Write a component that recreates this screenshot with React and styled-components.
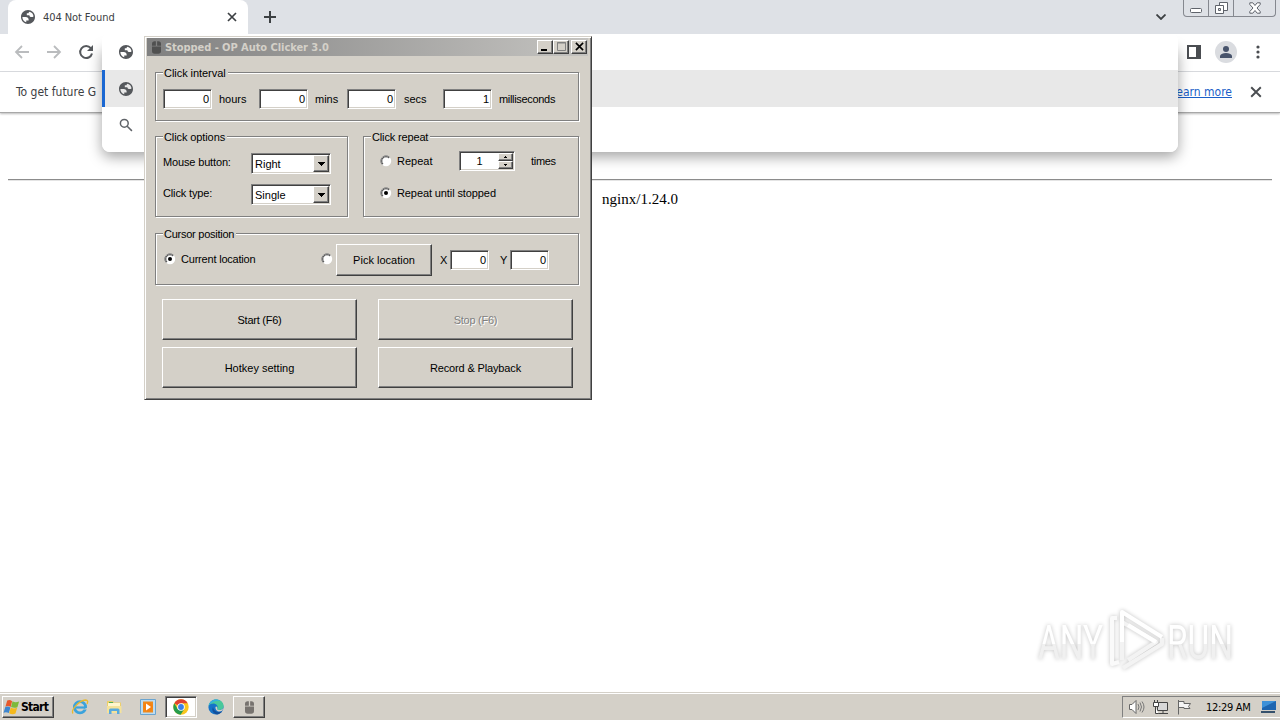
import React from "react";
import styled, { createGlobalStyle, css } from "styled-components";

const GlobalStyle = createGlobalStyle`
  * {
    box-sizing: border-box;
  }

  body {
    margin: 0;
    overflow: hidden;
    background: #fff;
  }
`;

const Desktop = styled.div`
  position: relative;
  display: flex;
  flex-direction: column;
  width: 1280px;
  height: 720px;
  overflow: hidden;
  color: #000;
  font-family: "Liberation Sans", sans-serif;
  font-size: 11px;
  white-space: nowrap;

  svg {
    display: block;
    flex: none;
  }
`;

/* ---------- browser ---------- */

const TabStrip = styled.div`
  display: flex;
  height: 34px;
  padding-left: 8px;
  background: #dee1e6;
`;

const Tab = styled.div`
  display: flex;
  align-items: center;
  width: 240px;
  padding: 0 11px 0 13px;
  background: #fff;
  border-radius: 8px 8px 0 0;
  color: #3c4043;
  font-family: "DejaVu Sans Condensed", "DejaVu Sans", sans-serif;
  font-size: 11px;
  letter-spacing: -0.08px;
`;

const TabTitle = styled.span`
  flex: 1;
  margin-left: 8px;
`;

const NewTab = styled.div`
  display: flex;
  align-items: center;
  flex: 1;
  padding-left: 16px;
`;

const TabSearch = styled.div`
  display: flex;
  align-items: center;
  margin-right: 17px;
`;

const WindowButtons = styled.div`
  display: flex;
  height: 17px;
  margin-right: 4px;
  border: 1px solid #85888f;
  border-top: 0;
  border-radius: 0 0 4px 4px;
`;

const WindowButton = styled.div`
  display: flex;
  justify-content: center;
  width: ${(props) => props.$width}px;
  padding-top: 2px;

  & + & {
    border-left: 1px solid #85888f;
  }
`;

const Toolbar = styled.div`
  display: flex;
  align-items: center;
  height: 38px;
  padding: 0 15px 2px 14px;
  border-bottom: 1px solid #dadce0;
`;

const NavIcons = styled.div`
  display: flex;
  flex: 1;
  gap: 16px;
`;

const ToolIcons = styled.div`
  display: flex;
  align-items: center;
  gap: 14px;
`;

const Avatar = styled.div`
  display: flex;
  align-items: center;
  justify-content: center;
  width: 22px;
  height: 22px;
  border-radius: 50%;
  background: #dadce0;
`;

const InfoBar = styled.div`
  display: flex;
  align-items: center;
  justify-content: space-between;
  height: 41px;
  padding: 0 18px 0 16px;
  border-bottom: 1px solid #a8a8a8;
  box-shadow: 0 1px 2px #bbb;
  color: #3c4043;
  font-family: "DejaVu Sans Condensed", "DejaVu Sans", sans-serif;
  font-size: 12px;
`;

const InfoActions = styled.div`
  display: flex;
  align-items: center;
  gap: 18px;
`;

const InfoLink = styled.a`
  color: #1a5fc8;
  text-decoration: underline;
`;

const Page = styled.main`
  flex: 1;
  padding: 66px 8px 0;
  font-family: "Liberation Serif", serif;
  font-size: 15px;
  text-align: center;
`;

const Rule = styled.hr`
  height: 2px;
  margin: 0 0 10px;
  border: 0;
  border-top: 1px solid #8c8c8c;
  border-bottom: 1px solid #e4e4e4;
`;

const Suggestions = styled.div`
  position: absolute;
  top: 34px;
  left: 102px;
  width: 1076px;
  height: 118px;
  overflow: hidden;
  border-radius: 6px 6px 8px 8px;
  background: #fff;
`;

const SuggestionShadow = styled.div`
  position: absolute;
  top: 44px;
  left: 102px;
  width: 1076px;
  height: 108px;
  border-radius: 8px;
  box-shadow: 0 5px 14px rgba(0, 0, 0, 0.36);
`;

const Suggestion = styled.div`
  display: flex;
  align-items: center;
  height: ${(props) => (props.$active ? 37 : 36)}px;
  padding-left: ${(props) => (props.$active ? 14 : 17)}px;
  background: ${(props) => (props.$active ? "#e8e8e8" : "#fff")};
  border-left: ${(props) => (props.$active ? "3px solid #1a67d2" : "0")};
`;

/* ---------- auto clicker ---------- */

const raised = css`
  border: 1px solid;
  border-color: #fff #404040 #404040 #fff;
  box-shadow: inset -1px -1px #808080;
`;

const sunken = css`
  border: 1px solid;
  border-color: #808080 #fff #fff #808080;
  box-shadow: inset 1px 1px #404040, inset -1px -1px #d4d0c8;
`;

const Dialog = styled.section`
  position: absolute;
  top: 36px;
  left: 144px;
  width: 448px;
  height: 364px;
  padding: 1px 3px 0 2px;
  border: 1px solid;
  border-color: #d4d0c8 #404040 #404040 #d4d0c8;
  background: #d4d0c8;
  box-shadow: inset 1px 1px #fff, inset -1px -1px #808080;
`;

const TitleBar = styled.header`
  display: flex;
  align-items: center;
  height: 18px;
  padding: 0 1px 0 5px;
  background: linear-gradient(90deg, #808080, #c4c3c0);
  color: #d4d0c8;
  font-family: "DejaVu Sans Condensed", "DejaVu Sans", sans-serif;
  font-weight: bold;
`;

const Title = styled.h1`
  flex: 1;
  margin: 0 0 0 4px;
  font-size: 11px;
  letter-spacing: -0.05px;
`;

const CaptionButton = styled.div`
  display: flex;
  align-items: center;
  justify-content: center;
  width: 16px;
  height: 14px;
  margin: 0 0 1px ${(props) => props.$gap || 0}px;
  background: #d4d0c8;
  ${raised}
`;

const DialogBody = styled.div`
  padding: 16px 9px 0 8px;
`;

const GroupRow = styled.div`
  display: flex;
  gap: 15px;
  margin: 15px 0 16px;
`;

const Group = styled.div`
  display: flex;
  flex-direction: column;
  width: ${(props) => props.$width}px;
  height: ${(props) => props.$height}px;
  padding-left: 7px;
  border: 1px solid #808080;
  box-shadow: 1px 1px #fff, inset 1px 1px #fff;
`;

const GroupTitle = styled.span`
  align-self: flex-start;
  height: 14px;
  margin-top: -7px;
  padding: 0 2px 0 1px;
  background: #d4d0c8;
  line-height: 14px;
  letter-spacing: ${(props) => props.$spacing || 0}px;
`;

const Label = styled.span`
  padding: 0 0 ${(props) => props.$lift || 0}px ${(props) => props.$indent || 0}px;
  letter-spacing: ${(props) => props.$spacing || 0}px;
`;

const IntervalRow = styled.div`
  display: grid;
  grid-template-columns: 56px 40px 56px 32px 57px 39px 56px auto;
  align-items: center;
  margin-top: 9px;
`;

const Field = styled.div`
  flex: none;
  width: ${(props) => props.$width || 49}px;
  height: 20px;
  padding-right: 2px;
  background: #fff;
  line-height: 18px;
  text-align: right;
  ${sunken}
`;

const OptionGrid = styled.div`
  display: grid;
  grid-template-columns: 88px 80px;
  grid-auto-rows: 21px;
  row-gap: 10px;
  align-items: center;
  margin-top: 9px;
`;

const Combo = styled.div`
  display: flex;
  align-items: center;
  justify-content: space-between;
  height: 21px;
  padding: 1px 1px 1px 3px;
  background: #fff;
  ${sunken}
`;

const ComboArrow = styled.div`
  display: flex;
  align-items: center;
  justify-content: center;
  width: 16px;
  height: 17px;
  background: #d4d0c8;
  ${raised}
`;

const RepeatRow = styled.div`
  display: flex;
  align-items: center;
  height: 20px;
  margin: ${(props) => props.$top}px 0 0 9px;
`;

const RepeatOption = styled.div`
  display: flex;
  align-items: center;
  gap: 5px;
  width: ${(props) => props.$width || "auto"};
`;

const Spinner = styled.div`
  display: flex;
  width: 56px;
  height: 20px;
  margin-right: 16px;
  padding: 1px;
  background: #fff;
  ${sunken}
`;

const SpinnerValue = styled.span`
  flex: 1;
  line-height: 17px;
  text-align: center;
`;

const SpinnerButtons = styled.div`
  display: flex;
  flex-direction: column;
`;

const SpinnerButton = styled.div`
  display: flex;
  align-items: center;
  justify-content: center;
  width: 15px;
  height: 8px;
  background: #d4d0c8;
  ${raised}
`;

const CursorRow = styled.div`
  display: grid;
  grid-template-columns: 157px 15px 104px 10px 50px 10px 39px;
  align-items: center;
  height: 32px;
  margin: 3px 0 0 1px;
`;

const RadioLine = styled.div`
  display: flex;
  align-items: center;
  gap: 5px;
  padding-bottom: 3px;
`;

const Button = styled.button`
  height: ${(props) => props.$height || 41}px;
  width: ${(props) => props.$width || 195}px;
  padding: 0;
  background: #d4d0c8;
  border-radius: 0;
  color: ${(props) => (props.disabled ? "#808080" : "#000")};
  font: 11px "Liberation Sans", sans-serif;
  letter-spacing: ${(props) => props.$spacing || 0}px;
  text-shadow: ${(props) => (props.disabled ? "1px 1px #fff" : "none")};
  ${raised}
`;

const ButtonGrid = styled.div`
  display: grid;
  grid-template-columns: 195px 195px;
  gap: 7px 21px;
  margin: 14px 0 0 7px;
`;

/* ---------- taskbar ---------- */

const Taskbar = styled.footer`
  display: flex;
  align-items: center;
  height: 28px;
  padding: 1px 0 0 2px;
  border-top: 1px solid #d4d0c8;
  background: #d4d0c8;
  box-shadow: inset 0 1px #fff;
`;

const StartButton = styled.div`
  display: flex;
  align-items: center;
  width: 52px;
  height: 22px;
  font-family: "DejaVu Sans Condensed", "DejaVu Sans", sans-serif;
  font-weight: bold;
  font-size: 12px;
  letter-spacing: -0.7px;
  ${raised}
`;

const Shortcuts = styled.div`
  display: flex;
  flex: 1;
  align-items: center;
  margin-left: 9px;
`;

const Shortcut = styled.div`
  display: flex;
  align-items: center;
  justify-content: center;
  width: 34px;
  height: 22px;
`;

const TaskButton = styled(Shortcut)`
  width: 32px;
  margin-right: 2px;
  ${(props) => (props.$active ? sunken : raised)}
  background: ${(props) => (props.$active ? "#fff" : "#d4d0c8")};
`;

const Tray = styled.div`
  display: flex;
  align-items: center;
  width: 158px;
  height: 22px;
  padding: 0 3px 0 5px;
  border: 1px solid;
  border-color: #808080 #fff #fff #808080;
  border-right: 0;
  font-family: "DejaVu Sans Condensed", "DejaVu Sans", sans-serif;
`;

const TrayIcons = styled.div`
  display: flex;
  gap: 7px;
`;

const Clock = styled.span`
  flex: 1;
  margin-left: 13px;
  letter-spacing: -0.3px;
`;

const Watermark = styled.div`
  position: absolute;
  left: 1030px;
  top: 602px;
  filter: drop-shadow(0 0 2px rgba(0, 0, 0, 0.24));
`;

/* ---------- icons ---------- */

const Globe = () => (
  <svg width="14" height="14" viewBox="2 2 20 20">
    <path
      d="M12 2C6.480 2 2 6.480 2 12s4.480 10 10 10 10-4.480 10-10S17.520 2 12 2zM4 12h4.400c3.400.020 4.900 1.730 4.500 5.130H9.500v2.470A8 8 0 0 1 4 12zm15.900-1.200c-.8.900-1.600 1.200-2.900 1.200-2 0-3-.9-3-2.500h-3.700V6.700h2.500c0-1.200.5-2 1.500-2.300a8 8 0 0 1 5.600 6.400z"
      fill="#55585c"
    />
  </svg>
);

const Cross = ({ size = 10, color = "#3c4043", weight = 1.7 }) => (
  <svg width={size} height={size} viewBox="0 0 10 10">
    <path d="m1 1 8 8M9 1 1 9" stroke={color} strokeWidth={weight} />
  </svg>
);

const Arrow = ({ back }) => (
  <svg width="16" height="16" viewBox="0 0 16 16">
    <path
      d={back ? "M15 8H2M8 2 2 8l6 6" : "M1 8h13M8 2l6 6-6 6"}
      fill="none"
      stroke="#babcbe"
      strokeWidth="1.8"
    />
  </svg>
);

const Reload = () => (
  <svg width="16" height="16" viewBox="0 0 16 16">
    <path
      d="M12.8 4.2A6 6 0 1 0 14 9.5"
      fill="none"
      stroke="#55585c"
      strokeWidth="2"
    />
    <path d="M15 1v6H9Z" fill="#55585c" />
  </svg>
);

const Search = () => (
  <svg width="14" height="14" viewBox="0 0 14 14">
    <g fill="none" stroke="#5f6368" strokeWidth="1.5">
      <circle cx="5.3" cy="5.3" r="3.9" />
      <path d="m8.2 8.2 4.7 4.7" />
    </g>
  </svg>
);

const Triangle = ({ up, width = 7, height = 4 }) => (
  <svg
    width={width}
    height={height}
    viewBox={`0 0 ${width} ${height}`}
    shapeRendering="crispEdges"
  >
    <path
      d={
        up
          ? `M0 ${height}H${width}L${width / 2} 0Z`
          : `M0 0H${width}L${width / 2} ${height}Z`
      }
    />
  </svg>
);

const Mouse = ({ width = 9, height = 13, color = "#505050" }) => (
  <svg width={width} height={height} viewBox="0 0 10 14">
    <path
      d="M0 5V3a3 3 0 0 1 3-3h1.3v5ZM5.7 0H7a3 3 0 0 1 3 3v2H5.7ZM0 6h10v5a3 3 0 0 1-3 3H3a3 3 0 0 1-3-3Z"
      fill={color}
    />
  </svg>
);

const Radio = ({ checked }) => (
  <svg width="12" height="12" viewBox="0 0 12 12">
    <circle cx="6" cy="6" r="5.2" fill="#fff" />
    <path d="M9.7 2.3a5.200 5.200 0 0 0-7.400 7.400" fill="none" stroke="#808080" />
    <path d="M9 3a4.240 4.240 0 0 0-6 6" fill="none" stroke="#404040" />
    {checked && <circle cx="6" cy="6" r="2" />}
  </svg>
);

const WindowsFlag = () => (
  <svg width="18" height="17" viewBox="0 0 17 16">
    <path d="M4 1.500Q6.300.3 8.600 2L7.200 7.500Q5 6 2.300 7.200Z" fill="#e8592b" />
    <path d="M9 2.200q2.500 1.700 6.200.2l-1.600 5.400Q10.600 9 7.600 7.600Z" fill="#7db93b" />
    <path d="M2.200 7.600Q4.700 6.400 7 7.900L5.500 13.300Q3 11.800.5 13Z" fill="#3e86cf" />
    <path d="M7.400 8.100q2.700 1.500 6 .2l-1.600 5.400q-2.800 1.300-6-.2Z" fill="#f5b91c" />
  </svg>
);

const Explorer = () => (
  <svg width="18" height="18" viewBox="0 0 18 18">
    <circle cx="9" cy="9.3" r="5.6" fill="none" stroke="#3ba3dc" strokeWidth="2.8" />
    <path d="M5 9.5h9.500" stroke="#3ba3dc" strokeWidth="2.2" />
    <path d="M11.500 11.600h5v-1.800z" fill="#d4d0c8" />
    <path
      d="M2 15.500C-.500 12 8 2.500 14.500 2c2.500 0 2.600 2 1.500 4"
      fill="none"
      stroke="#e9b92e"
      strokeWidth="1.3"
    />
  </svg>
);

const Folder = () => (
  <svg width="17" height="16" viewBox="0 0 17 16">
    <path d="M1 2h6l1 1.500h7V14H1Z" fill="#edcf6b" />
    <path d="M2 4h12v3H2Z" fill="#fff6ce" />
    <path d="M3 3h4v1H3Z" fill="#4eae59" />
    <path d="M1 7h14.500V14H1Z" fill="#f5e29a" />
    <path d="M3 15v-4q0-1.500 1.500-1.500h7.500q1.500 0 1.500 1.500v4h-2.500v-3H5.500v3Z" fill="#58a9de" />
  </svg>
);

const MediaPlayer = () => (
  <svg width="16" height="16" viewBox="0 0 16 16">
    <path d="M.5.5h15v15H.5Z" fill="#bcdcf2" stroke="#6aa4cf" />
    <path d="M3 2.500h10v11H3Z" fill="#ef8b1d" />
    <circle cx="8" cy="8" r="4.7" fill="#f48213" />
    <path d="m6 4.500 5 3.500-5 3.500Z" fill="#fff" />
  </svg>
);

const Chrome = () => (
  <svg width="16" height="16" viewBox="0 0 16 16">
    <circle cx="8" cy="8" r="7.7" fill="#f9c51d" />
    <path d="M8 8 1.300 4.200A7.700 7.700 0 0 1 14.700 4.200H8Z" fill="#df4132" />
    <path d="M1.300 4.200A7.700 7.700 0 0 0 7.600 15.700L11.300 9.900 8 8 4.700 9.900Z" fill="#269c4c" />
    <circle cx="8" cy="8" r="3.8" fill="#fff" />
    <circle cx="8" cy="8" r="2.9" fill="#397fe8" />
  </svg>
);

const Edge = () => (
  <svg width="16" height="16" viewBox="0 0 16 16">
    <circle cx="8" cy="8" r="7.6" fill="#1673c8" />
    <path
      d="M.5 7C1.200 3 4.300.4 8.200.4c4.500 0 7.400 3.100 7.400 6.600 0 2.600-2 4-4.300 4-2.300 0-2.500-.9-1.800-1.900C10.800 5.500 4.500 2 .5 7Z"
      fill="#48c89b"
    />
    <path d="M.5 7C1.200 3 4.300.4 8 .4c2 0 3.500.5 4.800 1.500C9 1.500 4 2.500.5 7Z" fill="#35afe0" />
    <path d="M5 8c-2 4 1 7 4.500 7.400 2-.3 3.600-1.600 4.600-3.200C10 14.300 5.500 12 5 8Z" fill="#124f9c" />
    <path d="M9.500 9.100c-.7 1-.5 1.900 1.800 1.900 1.700 0 3-.6 3.800-1.800l-.6 2.200c-3.500 2.600-7.500.2-7-3.400.3-1 1.500-.9 2 1.100Z" fill="#d4d0c8" />
  </svg>
);

const Speaker = () => (
  <svg width="17" height="16" viewBox="0 0 17 16">
    <path d="M1.500 5.500H4l4-4v13l-4-4H1.500Z" fill="#fff" stroke="#666" />
    <path d="M10 5q2 3 0 6M12 3.500q3 4.500 0 9M14 2.500q4 5.500 0 11" fill="none" stroke="#777" />
  </svg>
);

const Network = () => (
  <svg width="17" height="16" viewBox="0 0 17 16">
    <path d="M5.500 3.500h10v8h-10Z" fill="#d8d8d8" stroke="#444" />
    <path d="M6 14.500h10M11 12v2" stroke="#444" />
    <path d="M1.500 3.500h5v4h-5ZM2.500 1v2M5.500 1v2M3.500 8v6.500h3" fill="#fff" stroke="#444" />
  </svg>
);

const Flag = () => (
  <svg width="17" height="16" viewBox="0 0 17 16">
    <path d="M2.500 1v14.500M3 2.500h5v2h6.500l-2 3 1.500 2H8v-1H3" fill="#f4f4f4" stroke="#666" />
  </svg>
);

const ShowDesktop = () => (
  <svg width="16" height="14" viewBox="0 0 16 14">
    <path d="M1 1h14v9H1Z" fill="#1d65b0" />
    <path d="M1 1h14L1 8Z" fill="#3e91d8" />
    <path d="M0 12h14" stroke="#35506b" strokeWidth="2" />
  </svg>
);

const AnyRunLogo = () => (
  <svg width="240" height="80" viewBox="0 0 240 80">
    <defs>
      <linearGradient id="letters" x1="0" y1="0" x2="0" y2="1">
        <stop offset="0.52" stopColor="#fff" />
        <stop offset="0.53" stopColor="#f0f0f0" />
      </linearGradient>
    </defs>
    <g fill="url(#letters)" fontFamily="Roboto, sans-serif" fontSize="48">
      <text x="8" y="57" textLength="65" lengthAdjust="spacingAndGlyphs">
        ANY
      </text>
      <text x="137" y="57" textLength="66" lengthAdjust="spacingAndGlyphs">
        RUN
      </text>
    </g>
    <g fill="none" strokeWidth="4" strokeLinejoin="round">
      <path d="M87 16h-5v46l7-2" stroke="#fafafa" />
      <path d="M92 58V20M93 66l39-24v-6M98 58l28-18-34-20" stroke="#f3f3f3" />
      <path d="M92 40V10l40 25M98 23l28 17" stroke="#fff" />
    </g>
  </svg>
);

/* ---------- sections ---------- */

const intervals = [
  { label: "hours", value: 0 },
  { label: "mins", value: 0 },
  { label: "secs", value: 0 },
  { label: "milliseconds", value: 1, spacing: -0.32 },
];

const clickOptions = [
  { label: "Mouse button:", value: "Right" },
  { label: "Click type:", value: "Single" },
];

const Browser = () => (
  <>
    <TabStrip>
      <Tab>
        <Globe />
        <TabTitle>404 Not Found</TabTitle>
        <Cross />
      </Tab>
      <NewTab>
        <svg width="12" height="12" viewBox="0 0 12 12">
          <path d="M6 0v12M0 6h12" stroke="#3c4043" strokeWidth="2" />
        </svg>
      </NewTab>
      <TabSearch>
        <svg width="10" height="6" viewBox="0 0 10 6">
          <path d="m.5.5 4.500 4.500L9.500.5" fill="none" stroke="#3c4043" strokeWidth="1.8" />
        </svg>
      </TabSearch>
      <WindowButtons>
        <WindowButton $width={24}>
          <svg width="13" height="12" viewBox="0 0 13 12">
            <rect x=".5" y="6.500" width="11" height="4" rx="1" fill="#fff" stroke="#5f636b" />
          </svg>
        </WindowButton>
        <WindowButton $width={25}>
          <svg width="13" height="12" viewBox="0 0 13 12">
            <path d="M4.500.5h8v8h-8Z" fill="#fff" stroke="#5f636b" />
            <path d="M.5 3.500h8v8h-8Z" fill="#fff" stroke="#5f636b" />
            <path d="M3.500 6.500h2v2h-2Z" fill="#dee1e6" stroke="#5f636b" />
          </svg>
        </WindowButton>
        <WindowButton $width={42}>
          <svg width="12" height="12" viewBox="0 0 12 12">
            <path
              d="M.8.8h3L6 3.500 8.200.8h3v1.700L8 6l3.200 3.500v1.700h-3L6 8.500 3.800 11.200h-3V9.500L4 6 .8 2.500Z"
              fill="#fff"
              stroke="#5f636b"
            />
          </svg>
        </WindowButton>
      </WindowButtons>
    </TabStrip>
    <Toolbar>
      <NavIcons>
        <Arrow back />
        <Arrow />
        <Reload />
      </NavIcons>
      <ToolIcons>
        <svg width="14" height="14" viewBox="0 0 14 14">
          <path d="M1 1h12v12H1Z" fill="#fff" stroke="#4a4d51" strokeWidth="2" />
          <path d="M9 0h5v14H9Z" fill="#4a4d51" />
        </svg>
        <Avatar>
          <svg width="12" height="12" viewBox="0 0 12 12">
            <circle cx="6" cy="3" r="3" fill="#47536b" />
            <path d="M0 12V9.500Q1.500 7 6 7t6 2.500V12Z" fill="#47536b" />
          </svg>
        </Avatar>
        <svg width="14" height="16" viewBox="0 0 14 16">
          <g fill="#4a4d51">
            <circle cx="7" cy="3" r="1.6" />
            <circle cx="7" cy="8" r="1.6" />
            <circle cx="7" cy="13" r="1.6" />
          </g>
        </svg>
      </ToolIcons>
    </Toolbar>
    <InfoBar>
      <span>To get future G</span>
      <InfoActions>
        <InfoLink>Learn more</InfoLink>
        <Cross size={12} color="#4a4d51" weight={1.6} />
      </InfoActions>
    </InfoBar>
    <Page>
      <Rule />
      nginx/1.24.0
    </Page>
    <SuggestionShadow />
    <Suggestions>
      <Suggestion>
        <Globe />
      </Suggestion>
      <Suggestion $active>
        <Globe />
      </Suggestion>
      <Suggestion>
        <Search />
      </Suggestion>
    </Suggestions>
  </>
);

const AutoClicker = () => (
  <Dialog>
    <TitleBar>
      <Mouse />
      <Title>Stopped - OP Auto Clicker 3.0</Title>
      <CaptionButton>
        <svg width="8" height="8">
          <path d="M0 6h6v2H0Z" />
        </svg>
      </CaptionButton>
      <CaptionButton>
        <svg width="9" height="9" viewBox="0 0 9 9">
          <path d="M.5.5h8v8h-8Z" fill="none" stroke="#808080" />
          <path d="M0 1h9" stroke="#808080" />
        </svg>
      </CaptionButton>
      <CaptionButton $gap={2}>
        <Cross size={9} color="#000" weight={1.8} />
      </CaptionButton>
    </TitleBar>
    <DialogBody>
      <Group $width={424} $height={49}>
        <GroupTitle $spacing={-0.05}>Click interval</GroupTitle>
        <IntervalRow>
          {intervals.map(({ label, value, spacing }) => (
            <React.Fragment key={label}>
              <Field>{value}</Field>
              <Label $spacing={spacing}>{label}</Label>
            </React.Fragment>
          ))}
        </IntervalRow>
      </Group>
      <GroupRow>
        <Group $width={193} $height={81}>
          <GroupTitle $spacing={-0.1}>Click options</GroupTitle>
          <OptionGrid>
            {clickOptions.map(({ label, value }) => (
              <React.Fragment key={label}>
                <Label $lift={3} $spacing={-0.15}>
                  {label}
                </Label>
                <Combo>
                  {value}
                  <ComboArrow>
                    <Triangle />
                  </ComboArrow>
                </Combo>
              </React.Fragment>
            ))}
          </OptionGrid>
        </Group>
        <Group $width={216} $height={81}>
          <GroupTitle $spacing={-0.15}>Click repeat</GroupTitle>
          <RepeatRow $top={7}>
            <RepeatOption $width="79px">
              <Radio />
              <Label>Repeat</Label>
            </RepeatOption>
            <Spinner>
              <SpinnerValue>1</SpinnerValue>
              <SpinnerButtons>
                <SpinnerButton>
                  <Triangle up width={3} height={2} />
                </SpinnerButton>
                <SpinnerButton>
                  <Triangle width={3} height={2} />
                </SpinnerButton>
              </SpinnerButtons>
            </Spinner>
            <Label $spacing={-0.3}>times</Label>
          </RepeatRow>
          <RepeatRow $top={12}>
            <RepeatOption>
              <Radio checked />
              <Label $spacing={-0.1}>Repeat until stopped</Label>
            </RepeatOption>
          </RepeatRow>
        </Group>
      </GroupRow>
      <Group $width={424} $height={52}>
        <GroupTitle $spacing={-0.25}>Cursor position</GroupTitle>
        <CursorRow>
          <RadioLine>
            <Radio checked />
            <Label $spacing={-0.2}>Current location</Label>
          </RadioLine>
          <RadioLine>
            <Radio />
          </RadioLine>
          <Button $height={32} $width={96}>
            Pick location
          </Button>
          <Label>X</Label>
          <Field $width={39}>0</Field>
          <Label>Y</Label>
          <Field $width={39}>0</Field>
        </CursorRow>
      </Group>
      <ButtonGrid>
        <Button $spacing={-0.25}>Start (F6)</Button>
        <Button disabled $spacing={-0.25}>
          Stop (F6)
        </Button>
        <Button>Hotkey setting</Button>
        <Button $spacing={-0.15}>Record &amp; Playback</Button>
      </ButtonGrid>
    </DialogBody>
  </Dialog>
);

const App = () => (
  <>
    <GlobalStyle />
    <Desktop>
      <Browser />
      <AutoClicker />
      <Watermark>
        <AnyRunLogo />
      </Watermark>
      <Taskbar>
        <StartButton>
          <WindowsFlag />
          Start
        </StartButton>
        <Shortcuts>
          <Shortcut>
            <Explorer />
          </Shortcut>
          <Shortcut>
            <Folder />
          </Shortcut>
          <Shortcut>
            <MediaPlayer />
          </Shortcut>
          <TaskButton $active>
            <Chrome />
          </TaskButton>
          <Shortcut>
            <Edge />
          </Shortcut>
          <TaskButton>
            <Mouse color="#77736f" />
          </TaskButton>
        </Shortcuts>
        <Tray>
          <TrayIcons>
            <Speaker />
            <Network />
            <Flag />
          </TrayIcons>
          <Clock>12:29 AM</Clock>
          <ShowDesktop />
        </Tray>
      </Taskbar>
    </Desktop>
  </>
);

export default App;
